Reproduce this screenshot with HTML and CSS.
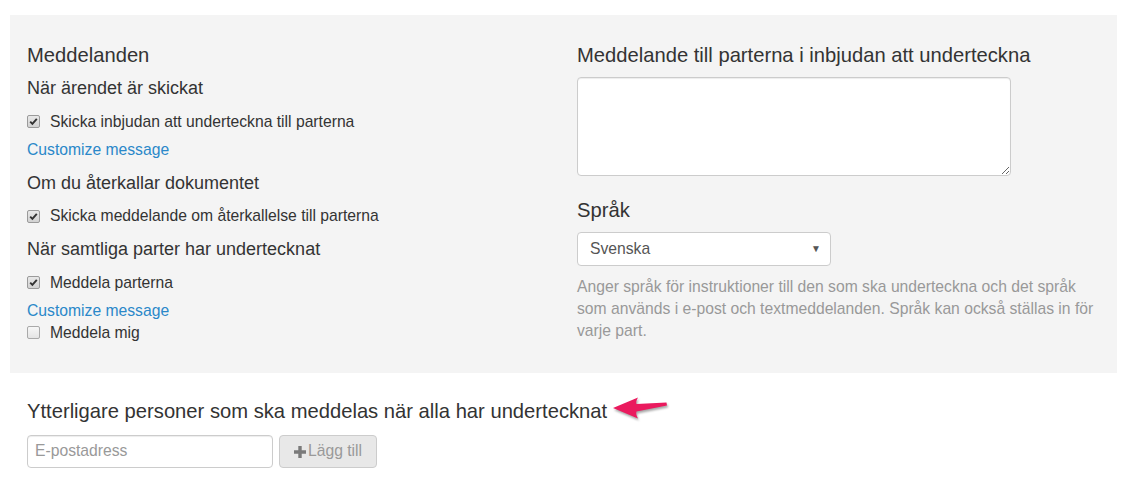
FILE: index.html
```html
<!DOCTYPE html>
<html lang="sv">
<head>
<meta charset="utf-8">
<title>Meddelanden</title>
<link rel="stylesheet" href="styles.css">
</head>
<body>
<div class="panel">
  <div class="col">
    <h4 class="title">Meddelanden</h4>
    <h5 class="sub">När ärendet är skickat</h5>
    <label class="check"><span class="box on"><svg viewBox="0 0 13 13" width="13" height="13"><path d="M3.2 6.6 L5.4 8.9 L9.8 3.8" fill="none" stroke="#333" stroke-width="1.9"/></svg></span>Skicka inbjudan att underteckna till parterna</label>
    <a class="link" href="#">Customize message</a>
    <h5 class="sub">Om du återkallar dokumentet</h5>
    <label class="check"><span class="box on"><svg viewBox="0 0 13 13" width="13" height="13"><path d="M3.2 6.6 L5.4 8.9 L9.8 3.8" fill="none" stroke="#333" stroke-width="1.9"/></svg></span>Skicka meddelande om återkallelse till parterna</label>
    <h5 class="sub">När samtliga parter har undertecknat</h5>
    <label class="check"><span class="box on"><svg viewBox="0 0 13 13" width="13" height="13"><path d="M3.2 6.6 L5.4 8.9 L9.8 3.8" fill="none" stroke="#333" stroke-width="1.9"/></svg></span>Meddela parterna</label>
    <a class="link" href="#">Customize message</a>
    <label class="check last"><span class="box"></span>Meddela mig</label>
  </div>
  <div class="col">
    <h4 class="title">Meddelande till parterna i inbjudan att underteckna</h4>
    <textarea class="msg"></textarea>
    <h4 class="title lang">Språk</h4>
    <div class="select"><span>Svenska</span><span class="caret">▼</span></div>
    <p class="help">Anger språk för instruktioner till den som ska underteckna och det språk som används i e-post och textmeddelanden. Språk kan också ställas in för varje part.</p>
  </div>
</div>
<div class="extra">
  <h4 class="title">Ytterligare personer som ska meddelas när alla har undertecknat<svg class="arrow" viewBox="0 0 56 26" width="56" height="26"><path d="M1 13 L26 2.5 Q23.5 6.5 24.5 9 L54.5 7.5 L55 10.5 L24.5 16.5 Q23.5 19.5 26 23.5 Z" fill="#ea1a5e"/></svg></h4>
  <div class="add">
    <input class="email" type="text" placeholder="E-postadress">
    <button class="btn" type="button"><svg viewBox="0 0 12 12" width="12" height="12"><path d="M4.3 0 H7.7 V4.3 H12 V7.7 H7.7 V12 H4.3 V7.7 H0 V4.3 H4.3 Z" fill="#7a7a7a"/></svg>Lägg till</button>
  </div>
</div>
</body>
</html>
```

FILE: styles.css
```css
* { box-sizing: border-box; }
html, body { margin: 0; padding: 0; background: #fff; }
body {
  font-family: "Liberation Sans", Arial, sans-serif;
  font-size: 15.7px;
  line-height: 22px;
  color: #333;
}
.panel {
  margin: 15px 16px 0 10px;
  background: #f4f4f4;
  padding: 29px 17px 29px 17px;
  display: grid;
  grid-template-columns: 523px 523px;
  column-gap: 27px;
}
.col { display: flex; flex-direction: column; align-items: flex-start; }
.title {
  margin: 0;
  font-size: 20.2px;
  line-height: 22px;
  font-weight: normal;
  color: #333;
}
.sub {
  margin: 12px 0 0;
  font-size: 18px;
  line-height: 20px;
  font-weight: normal;
  color: #333;
}
.check {
  margin-top: 12.5px;
  display: flex;
  align-items: center;
  height: 22px;
}
.check.last { margin-top: 0; }
.box {
  width: 13px;
  height: 13px;
  margin-right: 10px;
  border: 1px solid #a9a9a9;
  border-radius: 2px;
  background: linear-gradient(#f7f7f7, #e4e4e4);
  position: relative;
  flex: none;
}
.box.on { background: linear-gradient(#e8e8e8, #d2d2d2); border-color: #9a9a9a; }
.box svg { position: absolute; left: -1px; top: -1px; }
.link {
  margin-top: 6px;
  color: #2a88c9;
  text-decoration: none;
  line-height: 22px;
}
.msg {
  margin-top: 11px;
  width: 434px;
  height: 99px;
  border: 1px solid #ccc;
  border-radius: 4px;
  background: #fff;
  box-shadow: inset 0 1px 1px rgba(0,0,0,.075);
  resize: vertical;
  display: block;
}
.lang { margin-top: 23px; }
.select {
  margin-top: 11px;
  width: 254px;
  height: 34px;
  border: 1px solid #ccc;
  border-radius: 4px;
  background: #fff;
  padding: 0 9px 0 12px;
  display: flex;
  align-items: center;
  justify-content: space-between;
  color: #555;
}
.caret { font-size: 10px; color: #555; }
.help {
  margin: 10px 0 0;
  color: #999;
  line-height: 22px;
}
.extra { padding: 27px 27px 0; }
.extra .title { display: flex; align-items: center; }
.arrow {
  margin-left: 5px;
  margin-top: -5px;
  filter: drop-shadow(1px 2px 1px rgba(0,0,0,.35));
}
.add { margin-top: 13px; display: flex; gap: 6px; }
.email {
  width: 246px;
  height: 33px;
  border: 1px solid #ccc;
  border-radius: 4px;
  padding: 0 7px;
  font: inherit;
  color: #555;
  box-shadow: inset 0 1px 1px rgba(0,0,0,.075);
}
.email::placeholder { color: #999; }
.btn {
  width: 98px;
  height: 33px;
  border: 1px solid #ccc;
  border-radius: 4px;
  background: #e8e8e8;
  color: #999;
  font: inherit;
  display: flex;
  align-items: center;
  justify-content: center;
  gap: 2px;
  padding: 0;
}
.btn svg { margin-top: 1px; }
```
